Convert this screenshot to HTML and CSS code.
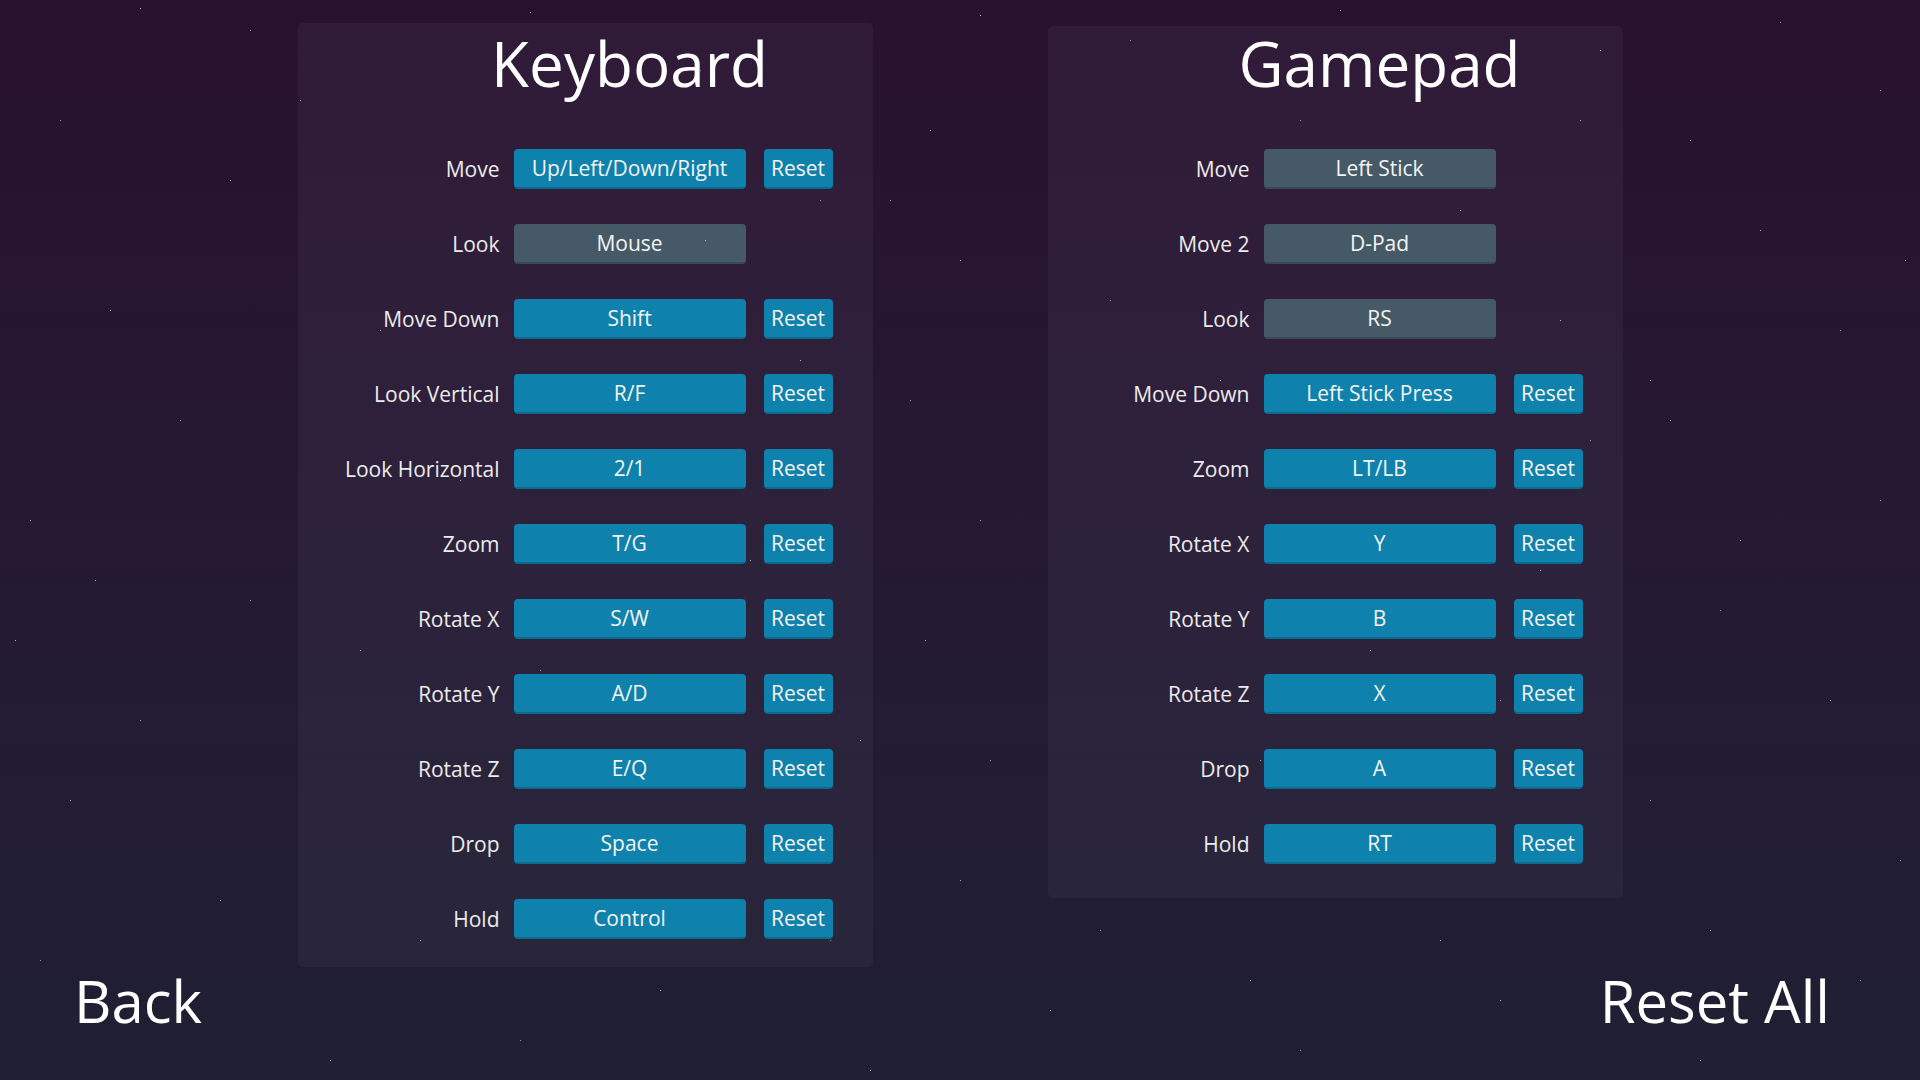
FILE: index.html
```html
<!DOCTYPE html>
<html lang="en">
<head>
<meta charset="utf-8">
<title>Controls</title>
<link rel="stylesheet" href="styles.css">
</head>
<body>
<div class="stars"></div>
<main class="panels">
  <section class="panel panel--keyboard">
    <div class="title-wrap"><h1 class="title">Keyboard</h1></div>
    <div class="grid">
      <div class="label">Move</div><div class="key">Up/Left/Down/Right</div><div class="reset">Reset</div>
      <div class="label">Look</div><div class="key key--fixed">Mouse</div><div></div>
      <div class="label">Move Down</div><div class="key">Shift</div><div class="reset">Reset</div>
      <div class="label">Look Vertical</div><div class="key">R/F</div><div class="reset">Reset</div>
      <div class="label">Look Horizontal</div><div class="key">2/1</div><div class="reset">Reset</div>
      <div class="label">Zoom</div><div class="key">T/G</div><div class="reset">Reset</div>
      <div class="label">Rotate X</div><div class="key">S/W</div><div class="reset">Reset</div>
      <div class="label">Rotate Y</div><div class="key">A/D</div><div class="reset">Reset</div>
      <div class="label">Rotate Z</div><div class="key">E/Q</div><div class="reset">Reset</div>
      <div class="label">Drop</div><div class="key">Space</div><div class="reset">Reset</div>
      <div class="label">Hold</div><div class="key">Control</div><div class="reset">Reset</div>
    </div>
  </section>
  <section class="panel panel--gamepad">
    <div class="title-wrap"><h1 class="title">Gamepad</h1></div>
    <div class="grid">
      <div class="label">Move</div><div class="key key--fixed">Left Stick</div><div></div>
      <div class="label">Move 2</div><div class="key key--fixed">D-Pad</div><div></div>
      <div class="label">Look</div><div class="key key--fixed">RS</div><div></div>
      <div class="label">Move Down</div><div class="key">Left Stick Press</div><div class="reset">Reset</div>
      <div class="label">Zoom</div><div class="key">LT/LB</div><div class="reset">Reset</div>
      <div class="label">Rotate X</div><div class="key">Y</div><div class="reset">Reset</div>
      <div class="label">Rotate Y</div><div class="key">B</div><div class="reset">Reset</div>
      <div class="label">Rotate Z</div><div class="key">X</div><div class="reset">Reset</div>
      <div class="label">Drop</div><div class="key">A</div><div class="reset">Reset</div>
      <div class="label">Hold</div><div class="key">RT</div><div class="reset">Reset</div>
    </div>
  </section>
</main>
<footer class="footer">
  <div class="nav">Back</div>
  <div class="nav">Reset All</div>
</footer>
</body>
</html>
```
FILE: styles.css
```css
html, body {
  margin: 0;
  padding: 0;
  width: 1920px;
  height: 1080px;
  overflow: hidden;
}
body {
  position: relative;
  display: flex;
  flex-direction: column;
  font-family: "Open Sans", "Noto Sans", sans-serif;
  color: #f2f2f2;
  background: linear-gradient(180deg, #28112f 0%, #261733 40%, #221c33 70%, #201f33 100%);
}
.stars {
  position: absolute;
  left: 0;
  top: 0;
  width: 1px;
  height: 1px;
  background: transparent;
  box-shadow:
    140px 8px #bbb, 250px 30px #999, 530px 12px #aaa, 700px 70px #888, 980px 15px #bbb, 1130px 40px #999,
    1340px 10px #aaa, 1600px 50px #ccc, 1780px 22px #999, 1880px 90px #aaa, 60px 120px #999, 230px 180px #bbb,
    110px 310px #aaa, 180px 420px #999, 30px 520px #bbb, 250px 600px #aaa, 140px 720px #999, 70px 800px #bbb,
    220px 900px #aaa, 40px 960px #999, 330px 1060px #aaa, 520px 1040px #999, 870px 1070px #bbb, 1050px 1010px #aaa,
    1300px 1050px #999, 1500px 1000px #bbb, 1700px 1060px #aaa, 1860px 980px #999, 930px 130px #aaa, 960px 260px #bbb,
    910px 400px #999, 980px 520px #aaa, 925px 640px #bbb, 990px 760px #999, 960px 880px #aaa, 1690px 140px #bbb,
    1760px 230px #aaa, 1840px 330px #999, 1670px 420px #bbb, 1880px 500px #aaa, 1720px 610px #999, 1830px 700px #bbb,
    1650px 800px #aaa, 1900px 860px #999, 1710px 930px #bbb, 600px 170px #bbb, 820px 200px #999, 1230px 180px #aaa,
    1460px 210px #bbb, 1300px 120px #999, 1400px 400px #aaa, 1590px 440px #999, 1370px 650px #bbb, 1180px 550px #aaa,
    380px 330px #999, 460px 480px #aaa, 360px 650px #bbb, 540px 670px #999, 750px 560px #aaa, 860px 740px #bbb,
    830px 940px #999, 420px 940px #aaa, 660px 990px #bbb, 1100px 930px #999, 1250px 980px #aaa, 1440px 940px #bbb,
    1500px 700px #999, 1260px 760px #aaa, 1560px 320px #bbb, 1110px 300px #999, 890px 200px #aaa, 800px 360px #bbb,
    300px 100px #999, 480px 250px #aaa, 705px 240px #bbb, 1580px 120px #aaa, 1650px 380px #ccc, 1740px 540px #ccc,
    1905px 260px #bbb, 15px 640px #bbb, 95px 580px #aaa, 1220px 380px #bbb, 1540px 570px #aaa;
}
.panels {
  display: flex;
  justify-content: center;
  align-items: flex-start;
  gap: 175px;
  padding-top: 23px;
}
.panel {
  width: 575px;
  box-sizing: border-box;
  border-radius: 5px;
  background: rgba(255, 255, 255, 0.04);
  padding: 8px 0 28px 0;
}
.panel--gamepad {
  margin-top: 3px;
  padding-top: 5px;
  padding-bottom: 34px;
}
.title-wrap {
  margin-left: 216px;
  width: 232px;
  height: 64px;
  margin-bottom: 54px;
  display: flex;
  justify-content: center;
}
.title {
  margin: 0;
  font-size: 62px;
  line-height: 64px;
  font-weight: 400;
  color: #ffffff;
  white-space: nowrap;
}
.grid {
  display: grid;
  grid-template-columns: 216px 232px 87px;
  grid-auto-rows: 40px;
  row-gap: 35px;
  align-items: center;
}
.label {
  justify-self: end;
  margin-right: 14px;
  font-size: 21px;
  color: #ececec;
  white-space: nowrap;
}
.key, .reset {
  height: 40px;
  box-sizing: border-box;
  border-radius: 4px;
  background: #0e81ac;
  border-bottom: 2px solid #0b6a8e;
  display: flex;
  align-items: center;
  justify-content: center;
  font-size: 21px;
  color: #f4f4f4;
  white-space: nowrap;
}
.key--fixed {
  background: #465966;
  border-bottom-color: #3a4a55;
}
.reset {
  margin-left: 18px;
}
.footer {
  margin-top: auto;
  display: flex;
  justify-content: space-between;
  padding: 0 90px 50px 74px;
}
.nav {
  font-size: 58px;
  line-height: 58px;
  color: #ffffff;
}
```
